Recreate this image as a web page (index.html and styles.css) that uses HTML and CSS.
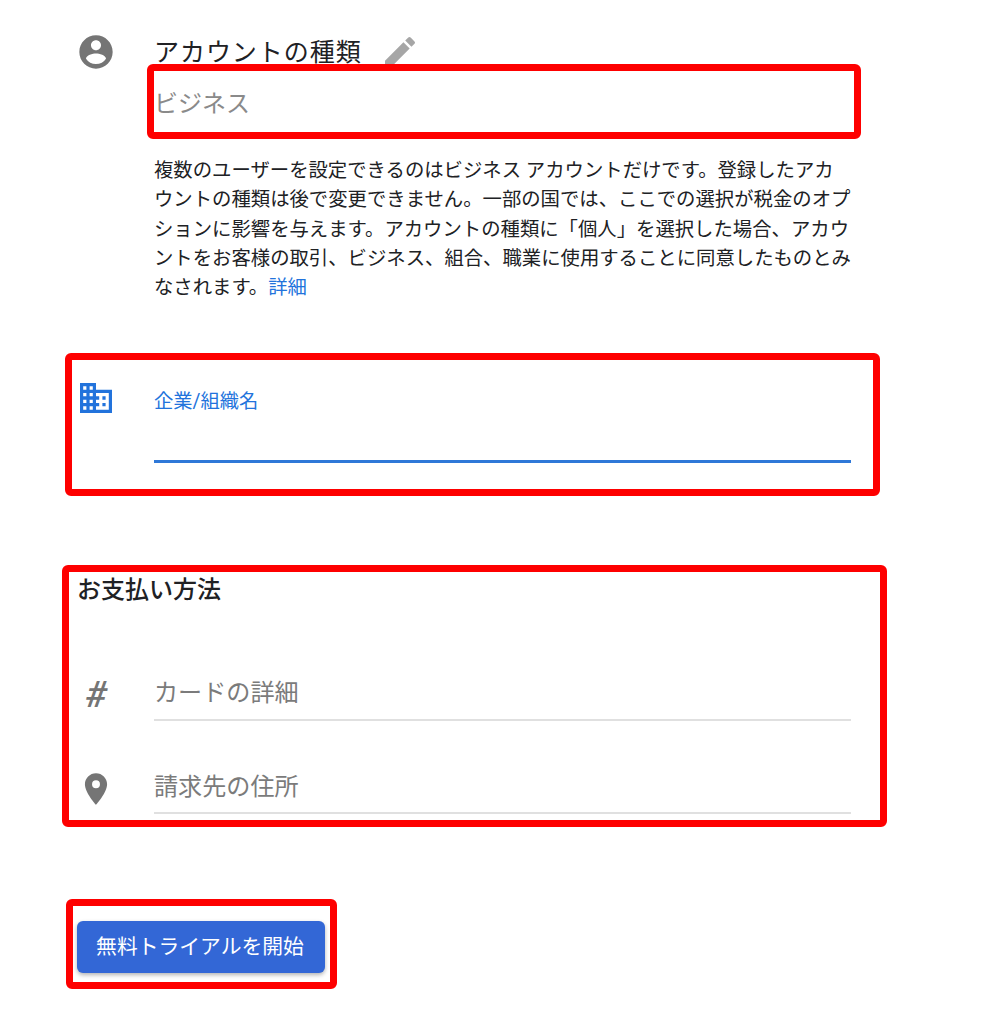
FILE: index.html
```html
<!DOCTYPE html>
<html lang="ja">
<head>
<meta charset="utf-8">
<title>お支払い情報</title>
<link rel="stylesheet" href="styles.css">
</head>
<body>
<main class="page">
  <section class="row account">
    <svg class="icon icon-account" viewBox="0 0 24 24"><path fill="#757575" d="M12 2C6.48 2 2 6.48 2 12s4.48 10 10 10 10-4.48 10-10S17.52 2 12 2zm0 3c1.66 0 3 1.34 3 3s-1.34 3-3 3-3-1.34-3-3 1.34-3 3-3zm0 14.2c-2.5 0-4.71-1.28-6-3.22.03-1.99 4-3.08 6-3.08 1.99 0 5.97 1.09 6 3.08-1.29 1.94-3.5 3.22-6 3.22z"/></svg>
    <div class="body">
      <h2 class="title">アカウントの種類
        <svg class="pencil" viewBox="0 0 24 24"><path fill="#a6a6a6" d="M3 17.25V21h3.75L17.81 9.94l-3.75-3.75L3 17.25zM20.71 7.04a1 1 0 0 0 0-1.41l-2.34-2.34a1 1 0 0 0-1.41 0l-1.83 1.83 3.75 3.75 1.83-1.83z"/></svg>
      </h2>
      <div class="value">ビジネス</div>
      <p class="note">複数のユーザーを設定できるのはビジネス アカウントだけです。登録したアカ<br>ウントの種類は後で変更できません。一部の国では、ここでの選択が税金のオプ<br>ションに影響を与えます。アカウントの種類に「個人」を選択した場合、アカウ<br>ントをお客様の取引、ビジネス、組合、職業に使用することに同意したものとみ<br>なされます。<a class="link" href="#">詳細</a></p>
    </div>
  </section>

  <section class="row company">
    <svg class="icon building" viewBox="2 3 20 18" preserveAspectRatio="none"><path fill="#2273dc" d="M12 7V3H2v18h20V7H12zM6 19H4v-2h2v2zm0-4H4v-2h2v2zm0-4H4V9h2v2zm0-4H4V5h2v2zm4 12H8v-2h2v2zm0-4H8v-2h2v2zm0-4H8V9h2v2zm0-4H8V5h2v2zm10 12h-8v-2h2v-2h-2v-2h2v-2h-2V9h8v10zm-2-8h-2v2h2v-2zm0 4h-2v2h2v-2z"/></svg>
    <div class="body">
      <label class="float-label">企業/組織名</label>
      <div class="active-line"></div>
    </div>
  </section>

  <h2 class="pay-title">お支払い方法</h2>

  <section class="row field card">
    <span class="icon hash">#</span>
    <div class="body input">カードの詳細</div>
  </section>

  <section class="row field address">
    <svg class="icon icon-pin" viewBox="0 0 24 24"><path fill="#757575" d="M12 2C8.13 2 5 5.13 5 9c0 5.25 7 13 7 13s7-7.75 7-13c0-3.87-3.13-7-7-7zm0 9.5a2.5 2.5 0 1 1 0-5 2.5 2.5 0 0 1 0 5z"/></svg>
    <div class="body input input-address">請求先の住所</div>
  </section>

  <button class="cta" type="button">無料トライアルを開始</button>

  <div class="mark mark-type"></div>
  <div class="mark mark-company"></div>
  <div class="mark mark-payment"></div>
  <div class="mark mark-cta"></div>
</main>
</body>
</html>
```
FILE: styles.css
```css
* { box-sizing: border-box; }
html, body { margin: 0; padding: 0; background: #fff; }
body { font-family: Roboto, "Noto Sans CJK JP", sans-serif; color: #202124; }
.page { position: relative; width: 990px; height: 1024px; padding: 34px 0 0 78px; overflow: hidden; }
.row { display: flex; }
.icon { flex: none; width: 36px; height: 36px; margin-right: 40px; }
.icon-account { width: 40px; height: 40px; margin: -2px 38px 0 -2px; }
.body { width: 697px; }
.title { display: flex; align-items: center; height: 38px; margin: 0; font-size: 25px; line-height: 38px; font-weight: 400; letter-spacing: .95px; }
.pencil { width: 40px; height: 40px; margin-left: 18px; margin-top: -2px; flex: none; }
.value { margin-top: 14px; font-size: 24px; line-height: 36px; color: #8a8a8a; }
.note { margin: 34px 0 0; font-size: 19.37px; line-height: 29.25px; color: #202124; white-space: nowrap; }
.link { color: #2273dc; text-decoration: none; }
.company { margin-top: 82px; }
.building { width: 32px; height: 30px; margin: -1px 42px 0 2px; }
.float-label { display: block; margin-top: 3px; font-size: 19.3px; line-height: 30px; color: #2273dc; }
.active-line { height: 3px; margin-top: 43px; background: #2f78d8; }
.pay-title { margin: 109px 0 0 -1px; font-size: 24px; line-height: 36px; font-weight: 500; }
.field { align-items: flex-end; }
.input { height: 46px; font-size: 24.1px; line-height: 36px; color: #7b7b7b; border-bottom: 2px solid #e0e0e0; }
.input-address { height: 45px; }
.card { margin-top: 67px; }
.address { margin-top: 48px; }
.hash { margin-bottom: 6px; font-size: 37px; line-height: 36px; font-weight: 500; font-style: italic; color: #757575; text-align: center; align-self: center; }
.icon-pin { width: 38px; height: 38px; margin: 0 39px 6px -1px; }
.cta { display: block; width: 248px; height: 52px; margin: 107px 0 0 -1px; padding: 0 2px 0 0; border: 0; border-radius: 6px; background: #3367d6; color: #fff; font: 400 20.8px/52px Roboto, "Noto Sans CJK JP", sans-serif; box-shadow: 0 2px 4px rgba(0,0,0,.3); }
.mark { position: absolute; border: 7px solid #fe0000; border-radius: 6px; }
.mark-type { left: 147px; top: 64px; width: 714px; height: 75px; }
.mark-company { left: 65px; top: 353px; width: 815px; height: 143px; }
.mark-payment { left: 62px; top: 565px; width: 825px; height: 262px; }
.mark-cta { left: 66px; top: 899px; width: 271px; height: 90px; }
```
